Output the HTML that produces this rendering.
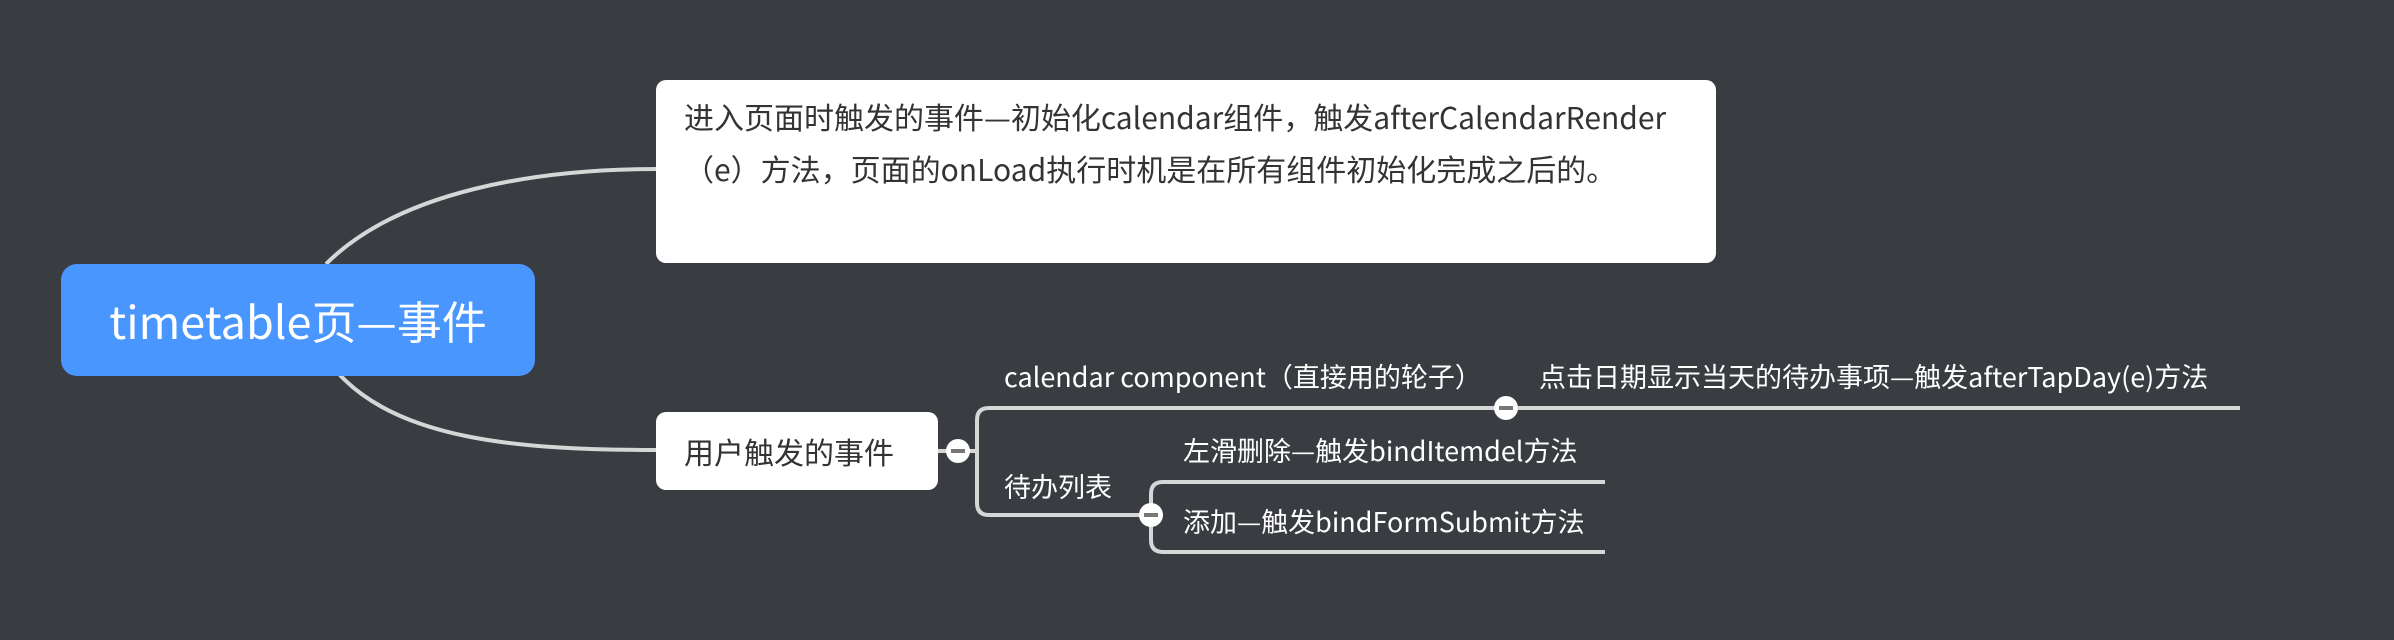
<!DOCTYPE html>
<html><head><meta charset="utf-8"><style>
html,body{margin:0;padding:0}
body{width:2394px;height:640px;background:#393c41;position:relative;overflow:hidden;font-family:"Noto Sans CJK SC","Liberation Sans",sans-serif}
.box{position:absolute;background:#fff;border-radius:10px;box-sizing:border-box}
.t{position:absolute;white-space:nowrap;color:#fff;font-size:27px;line-height:30px}
</style></head><body>
<svg width="2394" height="640" style="position:absolute;left:0;top:0">
<g fill="none" stroke="#d6d6d6" stroke-width="4">
<path d="M326 264 C400 190 540 169 656 169"/>
<path d="M339 374 C400 440 520 450 656 450"/>
<path d="M937 451 L977 451"/>
<path d="M977 451 L977 420 Q977 408 989 408 L2240 408"/>
<path d="M977 451 L977 503 Q977 515 989 515 L1151 515"/>
<path d="M1151 515 L1151 494 Q1151 482 1163 482 L1605 482"/>
<path d="M1151 515 L1151 540 Q1151 552 1163 552 L1605 552"/>
</g>
<g>
<circle cx="958" cy="451" r="12" fill="#fff"/><rect x="951" y="449" width="14" height="4" fill="#777"/>
<circle cx="1506" cy="408" r="12" fill="#fff"/><rect x="1499" y="406" width="14" height="4" fill="#777"/>
<circle cx="1151" cy="515" r="12" fill="#fff"/><rect x="1144" y="513" width="14" height="4" fill="#777"/>
</g>
</svg>
<div class="box" style="left:61px;top:264px;width:474px;height:112px;background:#4896fe;border-radius:16px;color:#fff;font-size:45px;line-height:112px;text-align:center">timetable页—事件</div>
<div class="box" style="left:656px;top:80px;width:1060px;height:183px;color:#333;font-size:30px;line-height:52px;padding:10px 0 0 28px">进入页面时触发的事件—初始化calendar组件，触发afterCalendarRender<br>（e）方法，页面的onLoad执行时机是在所有组件初始化完成之后的。</div>
<div class="box" style="left:656px;top:412px;width:282px;height:78px;color:#333;font-size:30px;line-height:78px;padding-left:28px">用户触发的事件</div>
<div class="t" style="left:1004px;top:361px">calendar component（直接用的轮子）</div>
<div class="t" style="left:1539px;top:361px">点击日期显示当天的待办事项—触发afterTapDay(e)方法</div>
<div class="t" style="left:1004px;top:471px">待办列表</div>
<div class="t" style="left:1183px;top:435px">左滑删除—触发bindItemdel方法</div>
<div class="t" style="left:1183px;top:506px">添加—触发bindFormSubmit方法</div>
</body></html>
